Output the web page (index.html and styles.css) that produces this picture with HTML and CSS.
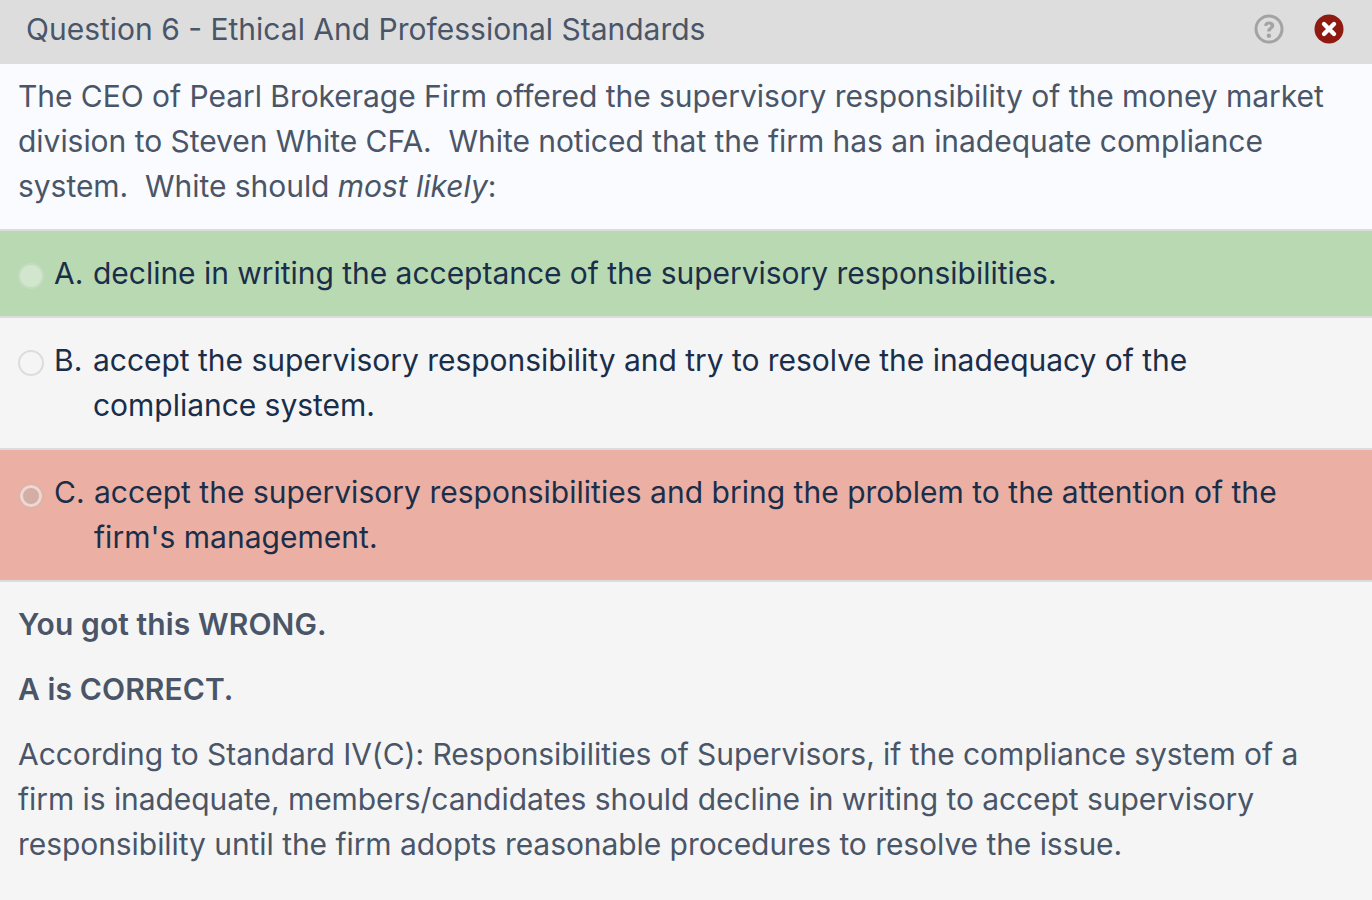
FILE: index.html
```html
<!DOCTYPE html>
<html lang="en">
<head>
    <meta charset="UTF-8">
    <title>Question 6</title>
    <link rel="stylesheet" href="styles.css">
</head>
<body>
    <header class="header">
        <h1>Question 6 - Ethical And Professional Standards</h1>
        <div class="header-icons">
            <svg width="30" height="30" viewBox="0 0 30 30"><circle cx="15" cy="15" r="13" fill="none" stroke="#a3a3a3" stroke-width="3"/><path d="M10 11.800c.3-2.900 2.400-4.400 5.100-4.400 3 0 5.100 1.700 5.100 4.200 0 3.500-3.600 3.500-3.600 5.800h-3.400c0-3.900 3.400-3.900 3.400-5.600 0-.9-.7-1.400-1.600-1.400-1 0-1.600.6-1.800 1.700z" fill="#a3a3a3"/><circle cx="14.900" cy="21.800" r="2.200" fill="#a3a3a3"/></svg>
            <svg width="30" height="30" viewBox="0 0 30 30"><circle cx="15" cy="15" r="14.500" fill="#8f1a10"/><path d="M10 10l10 10M20 10l-10 10" stroke="#fff" stroke-width="4.400" stroke-linecap="round"/></svg>
        </div>
    </header>
    <p class="question">The CEO of Pearl Brokerage Firm offered the supervisory responsibility of the money market division to Steven White CFA.&nbsp; White noticed that the firm has an inadequate compliance system.&nbsp; White should <em>most likely</em>:</p>
    <div class="option correct">
        <span class="radio"></span><span class="letter">A.</span>
        <span class="option-text">decline in writing the acceptance of the supervisory responsibilities.</span>
    </div>
    <div class="option">
        <span class="radio"></span><span class="letter">B.</span>
        <span class="option-text">accept the supervisory responsibility and try to resolve the inadequacy of the compliance system.</span>
    </div>
    <div class="option wrong">
        <span class="radio checked"></span><span class="letter">C.</span>
        <span class="option-text">accept the supervisory responsibilities and bring the problem to the attention of the firm's management.</span>
    </div>
    <section class="explain">
        <p class="verdict">You got this WRONG.</p>
        <p class="verdict">A is CORRECT.</p>
        <p class="reason">According to Standard IV(C): Responsibilities of Supervisors, if the compliance system of a firm is inadequate, members/candidates should decline in writing to accept supervisory responsibility until the firm adopts reasonable procedures to resolve the issue.</p>
    </section>
</body>
</html>
```
FILE: styles.css
```css
/* quiz question review */
html, body {
    margin: 0;
    height: 100%;
}
body {
    font-family: "Inter", "Liberation Sans", sans-serif;
    font-size: 30px;
    line-height: 45px;
    background-color: #f5f5f5;
    color: #4a5568;
    overflow: hidden;
}
.header {
    display: flex;
    justify-content: space-between;
    align-items: center;
    height: 64px;
    box-sizing: border-box;
    padding: 0 28px 6px 26px;
    background-color: #dddddd;
}
.header h1 {
    margin: 0;
    font-size: 30px;
    font-weight: 400;
}
.header-icons {
    display: flex;
    gap: 30px;
}
.header-icons svg {
    display: block;
}
.question {
    margin: 0;
    padding: 10px 18px 20px;
    background-color: #f9fbfe;
    letter-spacing: -0.04px;
}
.option {
    display: flex;
    padding: 20px 18px;
    border-top: 2px solid #dcdcdc;
    color: #1a2e4a;
}
.option-text {
    letter-spacing: -0.03px;
}
.correct {
    background-color: #b9d9b3;
}
.wrong {
    background-color: #ebb0a3;
}
.wrong .option-text {
    letter-spacing: 0.02px;
}
.radio {
    flex: none;
    width: 26px;
    height: 26px;
    margin: 12px 10px 0 0;
    box-sizing: border-box;
    border: 2px solid #dcdcdc;
    border-radius: 50%;
    background-color: #f5f5f5;
}
.correct .radio {
    border-color: #c5dbc0;
    background-color: #d2e5cd;
}
.radio.checked {
    margin-top: 13px;
    border: 2px solid #dab5ab;
    background-color: #d2aea6;
    box-shadow: inset 0 0 0 3px #f3d6ce;
}
.letter {
    flex: none;
    width: 39px;
}
.wrong .letter {
    width: 40px;
}
.explain {
    padding: 20px 18px;
    border-top: 2px solid #dcdcdc;
}
.explain p {
    margin: 0 0 20px;
}
.explain .verdict {
    font-weight: 600;
    letter-spacing: 0.1px;
}
.explain .reason {
    letter-spacing: -0.06px;
}
```
